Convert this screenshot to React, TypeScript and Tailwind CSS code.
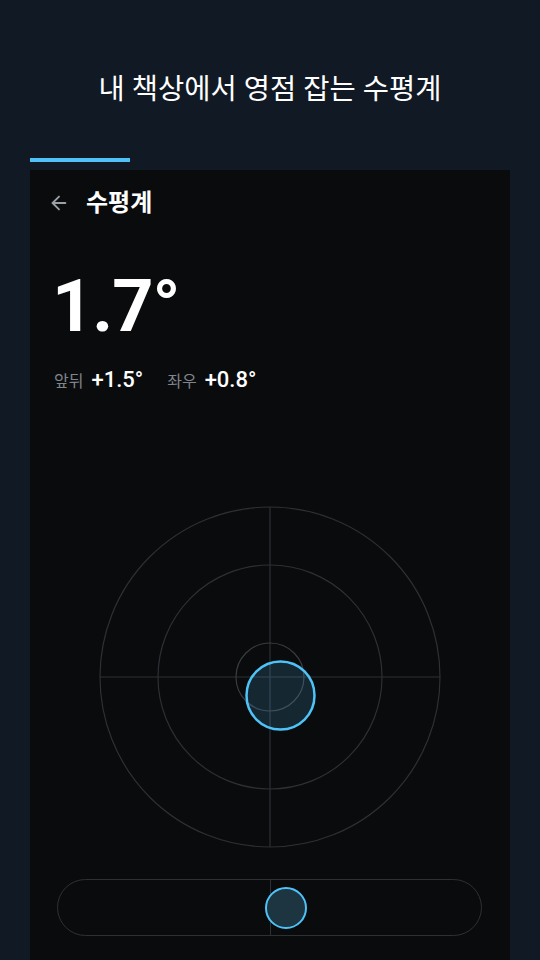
import { ArrowLeft } from 'lucide-react'

const font = { fontFamily: 'Roboto, "Noto Sans CJK KR", sans-serif' }

function LevelDial() {
  // tilt offset of the bubble from the centre, in px
  const bx = 10.5
  const by = 18.5
  return (
    <svg width="344" height="344" viewBox="-172 -172 344 344" className="block">
      <circle cx="0" cy="0" r="170" fill="none" stroke="#2e3034" strokeWidth="1.2" />
      <circle cx="0" cy="0" r="112" fill="none" stroke="#2e3034" strokeWidth="1.2" />
      <line x1="-170" y1="0" x2="170" y2="0" stroke="#2e3034" strokeWidth="1.2" />
      <line x1="0" y1="-170" x2="0" y2="170" stroke="#2e3034" strokeWidth="1.2" />
      <circle cx="0" cy="0" r="34" fill="none" stroke="#3a3c40" strokeWidth="1.2" />
      <circle cx={bx} cy={by} r="34" fill="#4fc3f7" fillOpacity="0.16" stroke="#4fc3f7" strokeWidth="2.5" />
    </svg>
  )
}

function RollBar() {
  return (
    <div className="relative mx-[27px] h-[57px] w-[425px] rounded-full border border-[#2e3034]">
      <div className="absolute left-[212px] top-0 h-full w-px bg-[#2e3034]" />
      <div className="absolute left-[207px] top-[7px] h-[42px] w-[42px] rounded-full border-[2.5px] border-[#4fc3f7] bg-[#1d3441]" />
    </div>
  )
}

export default function App() {
  return (
    <div className="flex h-[960px] w-[540px] flex-col overflow-hidden bg-[#111a24]" style={font}>
      <div className="flex h-[158px] flex-col items-center pt-[72px]">
        <h1 className="text-[28.5px] font-normal leading-[36px] text-white">내 책상에서 영점 잡는 수평계</h1>
      </div>
      <div className="ml-[30px] h-[4px] w-[100px] bg-[#4fc3f7]" />
      <div className="mx-[30px] mt-[8px] flex flex-1 flex-col bg-[#0a0b0d]">
        <div className="flex h-[66px] items-center gap-[16px] px-[18px]">
          <ArrowLeft size={22} color="#9aa0a6" strokeWidth={2} />
          <span className="text-[24px] font-bold text-white">수평계</span>
        </div>
        <div className="mt-[35px] px-[22px] text-[72px] font-bold leading-none tracking-[-1px] text-white">1.7°</div>
        <div className="mt-[23px] flex items-baseline px-[24px] leading-[28px]">
          <span className="text-[16px] text-[#80858c]">앞뒤</span>
          <span className="ml-[8px] text-[22px] font-medium text-white">+1.5°</span>
          <span className="ml-[24px] text-[16px] text-[#80858c]">좌우</span>
          <span className="ml-[8px] text-[22px] font-medium text-white">+0.8°</span>
        </div>
        <div className="mt-[109px] flex justify-center">
          <LevelDial />
        </div>
        <div className="mt-[30px]">
          <RollBar />
        </div>
      </div>
    </div>
  )
}
